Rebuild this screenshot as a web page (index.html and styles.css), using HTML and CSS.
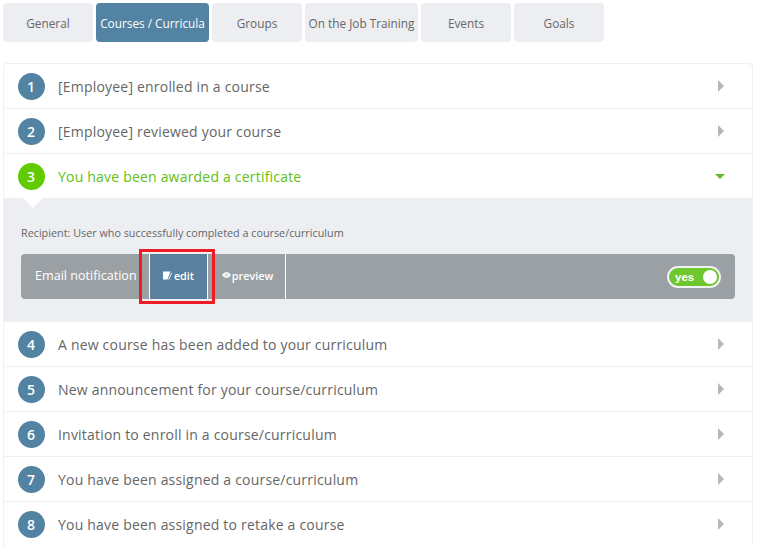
FILE: index.html
```html
<!DOCTYPE html>
<html lang="en">
<head>
<meta charset="utf-8">
<title>Notifications</title>
<link rel="stylesheet" href="styles.css">
</head>
<body>
<nav class="tabs">
  <a class="tab">General</a>
  <a class="tab tab-active">Courses / Curricula</a>
  <a class="tab">Groups</a>
  <a class="tab tab-wide">On the Job Training</a>
  <a class="tab">Events</a>
  <a class="tab">Goals</a>
</nav>
<section class="list">
  <div class="row"><span class="num">1</span><span class="title">[Employee] enrolled in a course</span><span class="arrow"></span></div>
  <div class="row"><span class="num">2</span><span class="title">[Employee] reviewed your course</span><span class="arrow"></span></div>
  <div class="row row-open"><span class="num">3</span><span class="title">You have been awarded a certificate</span><span class="arrow-down"></span></div>
  <div class="panel">
    <p class="recipient">Recipient: User who successfully completed a course/curriculum</p>
    <div class="bar">
      <span class="bar-label">Email notification</span>
      <a class="seg seg-edit">
        <svg class="ico-edit" width="9" height="9" viewBox="0 0 9 9"><path d="M0 0.5H7.5L4.5 8.5H0Z" fill="#fff"/><path d="M8.5 1.5L9 2.2L6 8.8H5.2Z" fill="#fff"/></svg><span>edit</span>
      </a>
      <a class="seg seg-preview">
        <svg class="ico-eye" width="9" height="6" viewBox="0 0 9 6"><path d="M0 3C1.5 0.7 3 0 4.5 0S7.5 0.7 9 3C7.5 5.3 6 6 4.5 6S1.5 5.3 0 3Z" fill="#f2f3f3"/><circle cx="4.5" cy="3" r="1.2" fill="#c9cccd"/></svg><span>preview</span>
      </a>
      <span class="toggle"><span class="toggle-text">yes</span><span class="knob"></span></span>
      <span class="highlight"></span>
    </div>
  </div>
  <div class="row"><span class="num">4</span><span class="title">A new course has been added to your curriculum</span><span class="arrow"></span></div>
  <div class="row"><span class="num">5</span><span class="title">New announcement for your course/curriculum</span><span class="arrow"></span></div>
  <div class="row"><span class="num">6</span><span class="title">Invitation to enroll in a course/curriculum</span><span class="arrow"></span></div>
  <div class="row"><span class="num">7</span><span class="title">You have been assigned a course/curriculum</span><span class="arrow"></span></div>
  <div class="row"><span class="num">8</span><span class="title">You have been assigned to retake a course</span><span class="arrow"></span></div>
</section>
</body>
</html>
```
FILE: styles.css
```css
html, body {
  margin: 0;
  height: 546px;
  overflow: hidden;
  background: #fff;
}
body {
  padding: 3px 4px 0 3px;
  box-sizing: border-box;
  font-family: "Open Sans", sans-serif;
  color: #666;
}
.tabs {
  display: flex;
  gap: 3px;
  height: 39px;
}
.tab {
  width: 90px;
  display: flex;
  align-items: center;
  justify-content: center;
  padding-top: 1px;
  box-sizing: border-box;
  background: #edeef2;
  border-radius: 4px;
  font-size: 11.8px;
  color: #666;
  white-space: nowrap;
}
.tab-wide { width: 113px; }
.tab-active {
  width: 113px;
  background: #5283a3;
  color: #fff;
}
.list {
  margin-top: 21px;
  width: 750px;
  box-sizing: border-box;
  border: 1px solid #eeeff1;
  border-radius: 4px;
}
.row {
  height: 45px;
  box-sizing: border-box;
  display: flex;
  align-items: center;
  padding: 0 28px 0 14px;
  border-bottom: 1px solid #eeeff1;
}
.num {
  width: 27px;
  height: 27px;
  border-radius: 50%;
  background: #5283a3;
  color: #fff;
  font-size: 14px;
  font-weight: 600;
  padding-right: 1px;
  box-sizing: border-box;
  display: flex;
  align-items: center;
  justify-content: center;
  flex: none;
}
.title {
  margin-left: 13px;
  flex: 1;
  font-size: 14px;
  letter-spacing: 0.2px;
  color: #666;
  white-space: nowrap;
}
.arrow {
  width: 0;
  height: 0;
  border-style: solid;
  border-width: 6px 0 6px 6px;
  border-color: transparent transparent transparent #b4b8bb;
}
.row-open {
  border-bottom: 0;
  height: 44px;
}
.row-open .num { background: #5fcb00; }
.row-open .title { color: #5fbf14; }
.arrow-down {
  width: 0;
  height: 0;
  margin-right: -1px;
  border-style: solid;
  border-width: 5px 5px 0 5px;
  border-color: #6bb92a transparent transparent transparent;
}
.panel {
  position: relative;
  height: 124px;
  box-sizing: border-box;
  background: #edeef2;
  padding: 27px 17px 0;
  border-bottom: 1px solid #eeeff1;
}
.panel::before {
  content: "";
  position: absolute;
  left: 19px;
  top: 0;
  border-style: solid;
  border-width: 10px 10px 0 10px;
  border-color: #fff transparent transparent transparent;
}
.recipient {
  margin: 0;
  font-size: 10.8px;
  line-height: 15px;
  color: #666;
}
.bar {
  position: relative;
  margin-top: 14px;
  height: 45px;
  display: flex;
  align-items: center;
  background: #9aa0a3;
  border-radius: 4px;
  color: #fff;
}
.bar-label {
  width: 114px;
  margin-left: 14px;
  padding-bottom: 3px;
  font-size: 12.6px;
  white-space: nowrap;
}
.seg {
  height: 45px;
  display: flex;
  align-items: center;
  justify-content: center;
  gap: 1px;
  box-sizing: border-box;
  font-size: 10.8px;
  font-weight: 600;
  padding-bottom: 3px;
  border-right: 1px solid #fff;
}
.seg-edit {
  width: 59px;
  gap: 2px;
  background: #5a80a0;
  border-left: 1px solid #fff;
}
.seg-preview {
  width: 78px;
  padding-left: 2px;
}
.ico-edit, .ico-eye { flex: none; }
.toggle {
  margin-left: auto;
  margin-right: 14px;
  width: 54px;
  height: 22px;
  box-sizing: border-box;
  display: flex;
  align-items: center;
  justify-content: space-between;
  padding: 0 2px 0 6px;
  background: #6fc72f;
  border: 2px solid #f1f2f3;
  border-radius: 11px;
}
.toggle-text {
  font-family: "Liberation Sans", sans-serif;
  font-size: 11.5px;
  font-weight: 700;
  padding-top: 1px;
}
.knob {
  width: 14px;
  height: 14px;
  border-radius: 50%;
  background: #fff;
}
.highlight {
  position: absolute;
  left: 118px;
  top: -5px;
  width: 76px;
  height: 55px;
  box-sizing: border-box;
  border: 3px solid #ed1c24;
}
```
